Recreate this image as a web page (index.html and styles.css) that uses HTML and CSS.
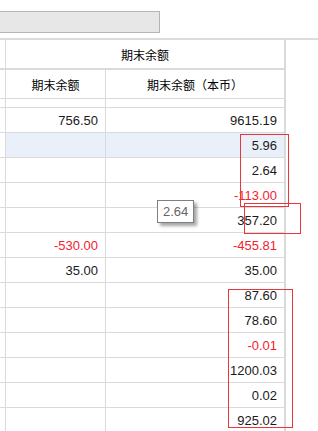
FILE: index.html
```html
<!DOCTYPE html>
<html>
<head>
<meta charset="utf-8">
<link rel="stylesheet" href="styles.css">
</head>
<body>
<div class="toolbar">
  <div class="search"></div>
</div>
<div class="grid-wrap">
  <table class="grid">
    <colgroup><col class="c0"><col class="c1"><col class="c2"></colgroup>
    <tr class="h1"><td class="edge"></td><td class="hd last" colspan="2">期末余额</td></tr>
    <tr class="h2"><td class="edge"></td><td class="hd">期末余额</td><td class="hd last">期末余额（本币）</td></tr>
    <tr class="partial"><td class="edge"></td><td></td><td class="last"></td></tr>
    <tr><td class="edge"></td><td>756.50</td><td class="last">9615.19</td></tr>
    <tr class="hl"><td class="edge"></td><td></td><td class="last">5.96</td></tr>
    <tr><td class="edge"></td><td></td><td class="last">2.64</td></tr>
    <tr><td class="edge"></td><td></td><td class="last neg">-113.00</td></tr>
    <tr><td class="edge"></td><td></td><td class="last">357.20</td></tr>
    <tr><td class="edge"></td><td class="neg">-530.00</td><td class="last neg">-455.81</td></tr>
    <tr><td class="edge"></td><td>35.00</td><td class="last">35.00</td></tr>
    <tr><td class="edge"></td><td></td><td class="last">87.60</td></tr>
    <tr><td class="edge"></td><td></td><td class="last">78.60</td></tr>
    <tr><td class="edge"></td><td></td><td class="last neg">-0.01</td></tr>
    <tr><td class="edge"></td><td></td><td class="last">1200.03</td></tr>
    <tr><td class="edge"></td><td></td><td class="last">0.02</td></tr>
    <tr><td class="edge"></td><td></td><td class="last">925.02</td></tr>
  </table>
  <div class="tip">2.64</div>
  <div class="mark m1"></div>
  <div class="mark m2"></div>
  <div class="mark m3"></div>
</div>
</body>
</html>
```
FILE: styles.css
```css
html, body {
  margin: 0;
  padding: 0;
  background: #fff;
  overflow: hidden;
}
body {
  width: 318px;
  height: 431px;
  font-family: "Liberation Sans", Arial, sans-serif;
  color: #1a1a1a;
}
.toolbar {
  height: 38px;
  overflow: hidden;
}
.search {
  margin-top: 11px;
  margin-left: -10px;
  width: 168px;
  height: 20px;
  border: 1px solid #b4b4b4;
  background: #e7e7e7;
}
.grid-wrap {
  position: relative;
  border-top: 2px solid #dcdcdc;
}
.grid {
  border-collapse: separate;
  border-spacing: 0;
  table-layout: fixed;
  width: 286px;
}
.c0 { width: 6px; }
.c1 { width: 100px; }
.c2 { width: 180px; }
.grid td {
  padding: 0 7px 0 0;
  border-right: 1px solid #dadada;
  border-bottom: 1px solid #dadada;
  height: 24px;
  text-align: right;
  font-size: 13px;
  white-space: nowrap;
  overflow: hidden;
  box-sizing: content-box;
}
.grid td.edge { padding: 0; }
.grid td.last { border-right: 2px solid #dadada; }
.grid tr.h1 td { height: 28px; border-bottom: 2px solid #dadada; }
.grid tr.h2 td { height: 28px; }
.grid tr.partial td { height: 8px; }
.grid td.hd {
  text-align: center;
  padding: 0;
  font-family: "Noto Sans CJK SC", "Liberation Sans", sans-serif;
  font-size: 12px;
  color: #000;
}
.grid tr.hl td { background: #e9f0f9; }
.grid tr.hl td.edge { background: #fff; }
.grid td.neg { color: #f5222d; }
.tip {
  position: absolute;
  left: 157px;
  top: 160px;
  width: 30px;
  height: 21px;
  padding-left: 5px;
  border: 1px solid #7f7f7f;
  background: #fff;
  color: #666;
  font-size: 13px;
  line-height: 21px;
  box-shadow: 3px 3px 3px rgba(0,0,0,0.35);
}
.mark {
  position: absolute;
  border: 1px solid #e8363c;
}
.m1 { left: 240px; top: 94px; width: 47px; height: 71px; }
.m2 { left: 244px; top: 163px; width: 55px; height: 29px; }
.m3 { left: 228px; top: 249px; width: 63px; height: 137px; }
```
